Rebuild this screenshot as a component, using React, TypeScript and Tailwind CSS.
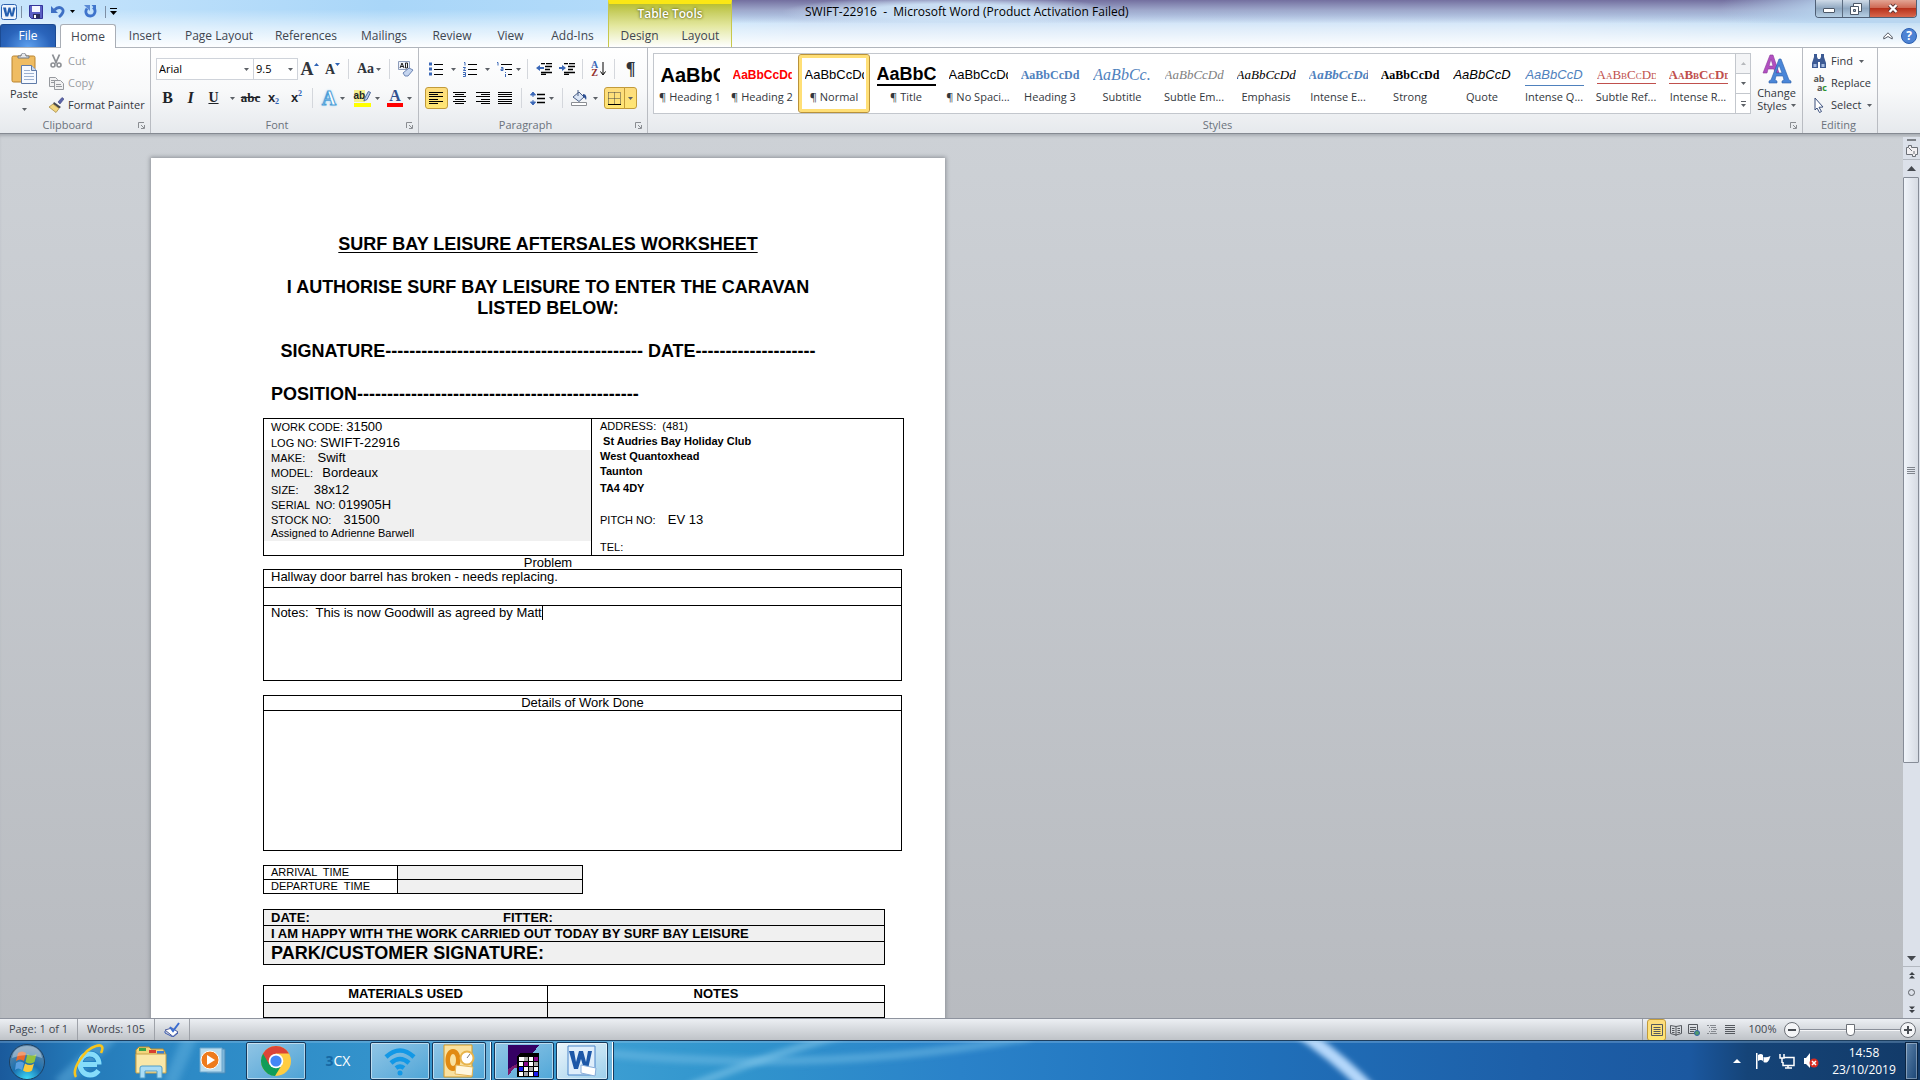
import type { ReactNode } from "react";
import clsx from "clsx";

const tabs = [
  { name: "Insert", width: "w-[58px]" },
  { name: "Page Layout", width: "w-[90px]" },
  { name: "References", width: "w-[84px]" },
  { name: "Mailings", width: "w-[72px]" },
  { name: "Review", width: "w-[64px]" },
  { name: "View", width: "w-[53px]" },
  { name: "Add-Ins", width: "w-[71px]" },
];

const sans = "font-['Liberation_Sans',sans-serif]";
const serif = "font-['Liberation_Serif',serif]";

const styles = [
  { name: "¶ Heading 1", sample: "AaBbC", className: clsx(sans, "text-xl font-bold text-black") },
  { name: "¶ Heading 2", sample: "AaBbCcDd", className: clsx(sans, "text-xs font-bold text-[#ff0000]") },
  { name: "¶ Normal", sample: "AaBbCcDd", className: clsx(sans, "text-[13px] text-black"), active: true },
  { name: "¶ Title", sample: "AaBbC", className: clsx(sans, "text-lg leading-5 font-bold text-black border-b-2 border-black") },
  { name: "¶ No Spaci...", sample: "AaBbCcDd", className: clsx(sans, "text-[13px] text-black") },
  { name: "Heading 3", sample: "AaBbCcDd", className: clsx(serif, "text-xs font-bold text-[#4f81bd]") },
  { name: "Subtitle", sample: "AaBbCc.", className: clsx(serif, "text-base italic text-[#4f81bd]") },
  { name: "Subtle Em...", sample: "AaBbCcDd", className: clsx(serif, "text-[13px] italic text-[#808080]") },
  { name: "Emphasis", sample: "AaBbCcDd", className: clsx(serif, "text-[13px] italic text-black") },
  { name: "Intense E...", sample: "AaBbCcDd", className: clsx(serif, "text-[13px] italic font-bold text-[#4f81bd]") },
  { name: "Strong", sample: "AaBbCcDd", className: clsx(serif, "text-xs font-bold text-black") },
  { name: "Quote", sample: "AaBbCcD", className: clsx(sans, "text-[13px] italic text-black") },
  { name: "Intense Q...", sample: "AaBbCcD", className: clsx(sans, "text-[13px] leading-5 italic text-[#4f81bd] border-b border-[#4f81bd]") },
  { name: "Subtle Ref...", sample: "AaBbCcDd", className: clsx(serif, "text-[13px] leading-4 [font-variant:small-caps] text-[#c0504d] border-b border-[#c0504d]") },
  { name: "Intense R...", sample: "AaBbCcDd", className: clsx(serif, "text-[13px] leading-4 [font-variant:small-caps] font-bold text-[#c0504d] border-b border-[#c0504d]") },
];

const caravan = [
  { label: "WORK CODE: ", value: "31500", className: "h-4" },
  { label: "LOG NO: ", value: "SWIFT-22916", className: "h-[15px]" },
  { label: "MAKE:    ", value: "Swift", className: "h-[15px] bg-[#f0f0f0]" },
  { label: "MODEL:   ", value: "Bordeaux", className: "h-[17px] bg-[#f0f0f0]" },
  { label: "SIZE:     ", value: "38x12", className: "h-[15px] bg-[#f0f0f0]" },
  { label: "SERIAL  NO: ", value: "019905H", className: "h-[15px] bg-[#f0f0f0]" },
  { label: "STOCK NO:    ", value: "31500", className: "h-[15px] bg-[#f0f0f0]" },
];

function Arrow({ className = "" }: { className?: string }) {
  return (
    <svg viewBox="0 0 5 3" className={clsx("h-[3px] w-[5px] shrink-0", className)}>
      <path d="M0 0h5L2.5 3z" fill="#5c6066" />
    </svg>
  );
}

function Tool({ label, className = "w-[23px]", active, children }: { label: string; className?: string; active?: boolean; children: ReactNode }) {
  return (
    <button
      aria-label={label}
      className={clsx(
        "flex h-[22px] shrink-0 items-center justify-center",
        className,
        active && "rounded-[3px] border border-[#c29b3a] bg-gradient-to-b from-[#fddc7e] to-[#ffe673]"
      )}
    >
      {children}
    </button>
  );
}

function Divider() {
  return <div className="mx-1 h-5 w-px shrink-0 bg-[#d4d7dc]" />;
}

function Launcher() {
  return (
    <button aria-label="More options" className="flex h-3 w-3 items-center justify-center">
      <svg viewBox="0 0 7 7" className="h-[7px] w-[7px]" fill="none" stroke="#8a8d92">
        <path d="M.5 6V.5H6M3 3l3 3M6.5 3v3.500H3" />
      </svg>
    </button>
  );
}

function Group({ title, className, launcher = true, children }: { title: string; className?: string; launcher?: boolean; children: ReactNode }) {
  return (
    <section className={clsx("flex shrink-0 flex-col border-r border-[#b9bcc2]", className)}>
      <div className="flex h-[69px]">{children}</div>
      <div className="flex h-4 items-center pr-[3px] text-[#6b727c]">
        <span className="flex-1 text-center">{title}</span>
        {launcher && <Launcher />}
      </div>
    </section>
  );
}

function Lines({ widths, align = "start" }: { widths: number[]; align?: "start" | "middle" | "end" }) {
  return (
    <svg viewBox="0 0 15 12" className="h-3 w-[15px]" shapeRendering="crispEdges">
      {widths.map((w, i) => (
        <rect key={i} y={i * 2.2} width={w} height="1" x={align === "start" ? 0 : align === "end" ? 15 - w : (15 - w) / 2} fill="#000" />
      ))}
    </svg>
  );
}

function WordLogo({ className }: { className: string }) {
  return (
    <svg viewBox="0 0 16 16" className={className}>
      <rect x=".5" y=".5" width="15" height="15" rx="2" fill="#eef4fc" stroke="#2c62ae" />
      <path d="M2 3.500h3l1 6 1.500-6h2l1.500 6 1-6h2.500l-2.200 9h-2.500L8.500 8l-1.300 4.500H4.500z" fill="#2560b0" />
    </svg>
  );
}

function TitleBar() {
  return (
    <header className="flex h-12 shrink-0 border-b border-[#b0b5bc] bg-[linear-gradient(to_bottom,transparent_20%,rgba(255,255,255,.55)_60%,#fdfeff_100%),linear-gradient(to_right,#c8e5fc_0%,#a9d6f8_20%,#b5dcfa_37%,#b4d3f3_42%,#bad7f4_80%,#9fcbee_100%)]">
      <div className="flex flex-col">
        <div className="flex h-[23px] items-center pl-px">
          <WordLogo className="h-4 w-4" />
          <div className="mx-1 h-3 w-px bg-[#7d8fa5]" />
          <button aria-label="Save" className="flex w-5 justify-center">
            <svg viewBox="0 0 14 14" className="h-3.5 w-3.5">
              <path d="M.5.5h13v13H2.500l-2-2z" fill="#5b5fc4" stroke="#34349a" />
              <path d="M3 1h8v6H3z" fill="#f4f6ff" />
              <path d="M4 9h7v4.500H4z" fill="#2b2d5c" />
              <path d="M5 10h2v3H5z" fill="#fff" />
            </svg>
          </button>
          <button aria-label="Undo" className="flex w-6 items-center justify-center">
            <svg viewBox="0 0 14 13" className="h-[13px] w-3.5" fill="none">
              <path d="M3.500 5C8 0 14 3.500 11.500 8c-.8 1.600-2 2.800-3.500 4" stroke="#3e6fc4" strokeWidth="2.800" />
              <path d="M0 1v7h7z" fill="#3e6fc4" />
            </svg>
          </button>
          <svg viewBox="0 0 5 3" className="h-[3px] w-[5px]"><path d="M0 0h5L2.5 3z" /></svg>
          <button aria-label="Repeat" className="flex w-[30px] justify-center">
            <svg viewBox="0 0 13 13" className="h-[13px] w-[13px]" fill="none">
              <path d="M9 2.500c4 3 1.500 8.500-2.500 8.500S.5 7 3 3.500" stroke="#3f74cc" strokeWidth="2.800" />
              <path d="M0 0h6v6z" fill="#5b8ad6" />
              <path d="M7.500 0H12v5z" fill="#3f74cc" />
            </svg>
          </button>
          <div className="mr-1 h-3 w-px bg-[#7d8fa5]" />
          <button aria-label="Customize Quick Access Toolbar" className="flex flex-col items-center gap-0.5">
            <span className="h-px w-[7px] bg-black" />
            <svg viewBox="0 0 7 4" className="h-1 w-[7px]"><path d="M0 0h7L3.500 4z" /></svg>
          </button>
        </div>
        <nav className="flex flex-1 text-xs text-[#3f4650]">
          <button className="mt-px mr-1 w-14 rounded-t-[3px] border border-b-0 border-[#1c4b93] bg-[radial-gradient(ellipse_at_bottom,#5ea0ee,#2a64bb_60%,#2157a8)] text-white">File</button>
          <button className="-mb-px mt-px w-14 rounded-t-[3px] border border-b-0 border-[#a9aeb6] bg-white">Home</button>
          {tabs.map((tab) => (
            <button key={tab.name} className={clsx("pt-0.5", tab.width)}>{tab.name}</button>
          ))}
        </nav>
      </div>
      <div className="flex w-[124px] flex-col border-x border-[#c7c84c] border-t-4 border-t-[#fbe714] bg-gradient-to-b from-[#b8bf31] via-[#e3e79d] to-white">
        <div className="flex h-[19px] items-center justify-center text-xs font-semibold text-white [text-shadow:0_0_3px_#6d7119,0_0_2px_#6d7119]">Table Tools</div>
        <div className="flex flex-1 text-xs text-[#3f4650]">
          <button className="flex-1 pt-0.5">Design</button>
          <button className="flex-1 pt-0.5">Layout</button>
        </div>
      </div>
      <div className="flex flex-1 flex-col bg-[linear-gradient(to_bottom,#736f9f,#9fa9cc_22%,transparent_50%)]">
        <div className="flex h-[23px] items-start justify-between bg-[radial-gradient(ellipse_170px_16px_at_220px_12px,rgba(205,226,246,.95)_50%,transparent),radial-gradient(ellipse_200px_40px_at_100%_8px,#b9d6f0_40%,transparent)]">
          <h1 className="pt-1 pl-[73px] text-xs text-black whitespace-pre">{"SWIFT-22916  -  Microsoft Word (Product Activation Failed)"}</h1>
          <div className="mr-[3px] flex h-[18px] overflow-hidden rounded-b-[4px] border border-t-0 border-[#4f5f75]">
            <button aria-label="Minimize" className="flex w-[27px] items-center justify-center border-r border-[#5c6c80] bg-gradient-to-b from-[#cfdbe8] via-[#8fa7c0] to-[#b6cfe4]">
              <span className="mt-1 h-[5px] w-3 rounded-[1px] border border-[#4c5868] bg-white" />
            </button>
            <button aria-label="Restore Down" className="flex w-[27px] items-center justify-center border-r border-[#5c6c80] bg-gradient-to-b from-[#cfdbe8] via-[#8fa7c0] to-[#b6cfe4]">
              <svg viewBox="0 0 12 12" className="h-3 w-3" fill="#fff" stroke="#4c5868">
                <path d="M3.500.5h8v8h-8z" />
                <path d="M.5 3.500h8v8h-8z" />
                <path d="M3.500 6.500h2v2h-2z" fill="#9fb3c8" />
              </svg>
            </button>
            <button aria-label="Close" className="flex w-[46px] items-center justify-center bg-[linear-gradient(to_bottom,#e3a494,#cf6a55_45%,#b8321c_50%,#d8674d)]">
              <svg viewBox="0 0 12 11" className="h-[11px] w-3" fill="none">
                <path d="M2.500 2l7 7M9.500 2l-7 7" stroke="#5b3434" strokeWidth="4" />
                <path d="M2.500 2l7 7M9.500 2l-7 7" stroke="#fff" strokeWidth="2.400" />
              </svg>
            </button>
          </div>
        </div>
        <div className="flex flex-1 items-center justify-end gap-2 pt-0.5 pr-[3px]">
          <button aria-label="Minimize the Ribbon">
            <svg viewBox="0 0 10 8" className="h-2 w-2.5" fill="#fff" stroke="#555b65"><path d="M5 .8L9.200 5v2L5 4.500.8 7V5z" /></svg>
          </button>
          <button aria-label="Help" className="flex h-4 w-4 items-center justify-center rounded-full border border-[#2c5fb0] bg-[#4d83d4] text-xs font-bold text-white">?</button>
        </div>
      </div>
    </header>
  );
}

function Clipboard() {
  return (
    <Group title="Clipboard" className="w-[151px]">
      <button className="flex w-12 flex-col items-center pt-[5px]">
        <svg viewBox="0 0 27 31" className="h-[31px] w-[27px]">
          <rect x="1" y="3" width="23" height="26" rx="1.500" fill="#efbc62" stroke="#b9832e" />
          <path d="M7 5V3h3c0-4 5-4 5 0h3v2z" fill="#e6e8ec" stroke="#6f7680" />
          <path d="M10.500 12.500h10l5 5v13h-15z" fill="#f5f9ff" stroke="#5f7ba8" />
          <path d="M20.500 12.500v5h5" fill="#c9d9ef" stroke="#5f7ba8" />
          <path d="M13 17.500h6M13 20.500h10M13 23.500h10M13 26.500h10" stroke="#9cb0cf" />
        </svg>
        <span className="leading-5">Paste</span>
        <Arrow className="mt-1" />
      </button>
      <div className="flex flex-col pt-[2px] text-[#9a9da2]">
        <button className="flex h-[22px] items-center gap-1">
          <svg viewBox="0 0 16 16" className="h-4 w-4" fill="none" stroke="#8d9095">
            <path d="M4.500 1.500l4 9M11.500 1.500l-4 9" strokeWidth="1.800" />
            <circle cx="5" cy="12" r="2" strokeWidth="1.600" />
            <circle cx="11" cy="12" r="2" strokeWidth="1.600" />
          </svg>
          Cut
        </button>
        <button className="flex h-[22px] items-center gap-1">
          <svg viewBox="0 0 16 16" className="h-4 w-4" fill="#f1f1f2" stroke="#96999e">
            <path d="M1.500 2.500h6l2 2v7h-8zM3 5.500h4M3 7.500h4" />
            <path d="M6.500 5.500h6l3 3v6h-9zM8 9.500h5M8 11.500h6" />
          </svg>
          Copy
        </button>
        <button className="flex h-[22px] items-center gap-1 text-[#33373d]">
          <svg viewBox="0 0 16 16" className="h-4 w-4">
            <path d="M10 5l4-4.500 2 1.500-4 5z" fill="#5b64a8" stroke="#3d4380" strokeWidth=".6" />
            <path d="M6 5l7 5-2 1.500-6-4.500z" fill="#44474e" />
            <path d="M5 7l6 4.500L8 15.500 1 10z" fill="#f2d680" stroke="#a38439" strokeWidth=".7" />
          </svg>
          Format Painter
        </button>
      </div>
    </Group>
  );
}

function FontGroup() {
  return (
    <Group title="Font" className="w-[268px]">
      <div className="flex flex-col gap-[7px] pt-[10px] pl-[5px]">
        <div className="flex items-center">
          <div className="flex h-[22px] border border-[#cfd3da] bg-white text-black">
            <div className="flex w-[97px] items-center border-r border-[#cfd3da] pr-1">
              <input aria-label="Font" defaultValue="Arial" className="w-full min-w-0 px-0.5 outline-none" />
              <Arrow />
            </div>
            <div className="flex w-[43px] items-center pr-1">
              <input aria-label="Font size" defaultValue="9.5" className="w-full min-w-0 px-0.5 outline-none" />
              <Arrow />
            </div>
          </div>
          <Tool label="Grow Font">
            <span className={clsx(serif, "text-lg font-bold text-[#30343a]")}>A</span>
            <svg viewBox="0 0 5 3" className="mb-2.5 h-[3px] w-[5px]"><path d="M0 3h5L2.500 0z" fill="#2d62b5" /></svg>
          </Tool>
          <Tool label="Shrink Font">
            <span className={clsx(serif, "pt-0.5 text-sm font-bold text-[#30343a]")}>A</span>
            <svg viewBox="0 0 5 3" className="mb-2.5 h-[3px] w-[5px]"><path d="M0 0h5L2.500 3z" fill="#2d62b5" /></svg>
          </Tool>
          <Divider />
          <Tool label="Change Case" className="w-8 gap-0.5">
            <span className={clsx(serif, "text-sm font-bold text-[#30343a]")}>Aa</span>
            <Arrow />
          </Tool>
          <Divider />
          <Tool label="Clear Formatting">
            <svg viewBox="0 0 16 16" className="h-4 w-4">
              <path d="M.5.5h11v8H.5z" fill="#eef2fa" stroke="#8d9cba" />
              <path d="M2 7l2-5 2 5M2.800 5.500h2.500M7.500 2v5h2V2z" fill="none" stroke="#222" />
              <path d="M5 12l6-5 4 2-5 6H7z" fill="#c5d5ef" stroke="#6e86b4" />
            </svg>
          </Tool>
        </div>
        <div className={clsx(serif, "flex items-center text-base text-[#202328]")}>
          <Tool label="Bold"><b>B</b></Tool>
          <Tool label="Italic"><i className="font-semibold">I</i></Tool>
          <Tool label="Underline"><b className="text-sm underline">U</b></Tool>
          <Tool label="Underline style" className="w-3.5"><Arrow /></Tool>
          <Tool label="Strikethrough"><b className="text-[13px] line-through">abc</b></Tool>
          <Tool label="Subscript"><b className={clsx(sans, "text-[13px]")}>x</b><b className="pt-2 text-[8px] text-[#2d62b5]">2</b></Tool>
          <Tool label="Superscript"><b className={clsx(sans, "text-[13px]")}>x</b><b className="pb-2 text-[8px] text-[#2d62b5]">2</b></Tool>
          <Divider />
          <Tool label="Text Effects" className="w-[33px] gap-1">
            <b className="text-xl text-white [-webkit-text-stroke:1px_#4e9fd8] [text-shadow:0_0_3px_#6ebcf0]">A</b><Arrow />
          </Tool>
          <Tool label="Text Highlight Color" className="w-[33px] gap-1">
            <span className="relative h-[17px] w-[17px] border-b-4 border-[#ffff00]">
              <b className="absolute top-0 left-0 bg-[#f5f08c] font-['Liberation_Sans',sans-serif] text-[10px] leading-3">ab</b>
              <svg viewBox="0 0 9 12" className="absolute top-0 right-0 h-3 w-2"><path d="M6 1l2.500 1-4 8L1 11.500l1-3z" fill="#b5cbe9" stroke="#3c5b92" /></svg>
            </span>
            <Arrow />
          </Tool>
          <Tool label="Font Color" className="w-[33px] gap-1">
            <b className="flex h-[17px] w-4 justify-center border-b-4 border-[#ff0000] text-base leading-3 text-[#33518f]">A</b>
            <Arrow />
          </Tool>
        </div>
      </div>
    </Group>
  );
}

function Paragraph() {
  return (
    <Group title="Paragraph" className="w-[229px]">
      <div className="flex flex-col gap-[7px] pt-[10px] pl-[6px]">
        <div className="flex items-center">
          <Tool label="Bullets" className="w-[34px] gap-2">
            <svg viewBox="0 0 14 14" className="h-3.5 w-3.5" stroke="#000"><path d="M5 2.500h9M5 7.500h9M5 12.500h9" /><path d="M0 2h3M0 7h3M0 12h3" stroke="#3b68b8" strokeWidth="3" /></svg>
            <Arrow />
          </Tool>
          <Tool label="Numbering" className="w-[35px] gap-2">
            <svg viewBox="0 0 14 15" className="h-[15px] w-3.5" fill="none" stroke="#000"><path d="M5 2.500h9M5 7.500h9M5 12.500h9" /><path d="M1 .5h1v3M0 5.500h2.500l-2 3H3M0 10.500h2.500v4H0m0-2h2.500" stroke="#3b68b8" /></svg>
            <Arrow />
          </Tool>
          <Tool label="Multilevel List" className="w-[29px] gap-1">
            <svg viewBox="0 0 16 15" className="h-[15px] w-4" fill="none" stroke="#000"><path d="M5 2.500h11M9 7.500h7M12 12.500h4" /><path d="M1 .5h1v3M5 5.500h2v3H5v-1.500h2M9.500 10v1m0 1v3" stroke="#3b68b8" /></svg>
            <Arrow />
          </Tool>
          <Divider />
          <Tool label="Decrease Indent">
            <svg viewBox="0 0 16 12" className="h-3 w-4" fill="none" stroke="#000"><path d="M5 .5h4M10 .5h6M9 3.500h7M9 6.500h5M5 9.500h11M5 11.500h5" strokeWidth="1.300" /><path d="M0 5l4-3v2h4v2H4v2z" fill="#3b68b8" stroke="none" /></svg>
          </Tool>
          <Tool label="Increase Indent">
            <svg viewBox="0 0 16 12" className="h-3 w-4" fill="none" stroke="#000"><path d="M5 .5h4M10 .5h6M9 3.500h7M9 6.500h5M5 9.500h11M5 11.500h5" strokeWidth="1.300" /><path d="M7 5L3 2v2H0v2h3v2z" fill="#3b68b8" stroke="none" /></svg>
          </Tool>
          <Divider />
          <Tool label="Sort">
            <span className={clsx(serif, "flex flex-col text-[10px] leading-[8px] font-bold")}>
              <span className="text-[#3b68b8]">A</span>
              <span className="text-[#93302c]">Z</span>
            </span>
            <svg viewBox="0 0 6 14" className="ml-0.5 h-3.5 w-1.5" fill="none" stroke="#000"><path d="M3 0v12M.5 9.500L3 13l2.500-3.500" /></svg>
          </Tool>
          <Divider />
          <Tool label="Show/Hide ¶"><span className={clsx(serif, "text-lg font-bold text-[#30343a]")}>¶</span></Tool>
        </div>
        <div className="flex items-center">
          <Tool label="Align Text Left" active><Lines widths={[14, 9, 14, 9, 14, 9]} /></Tool>
          <Tool label="Center"><Lines widths={[13, 9, 13, 9, 13, 9]} align="middle" /></Tool>
          <Tool label="Align Text Right"><Lines widths={[14, 9, 14, 9, 14, 9]} align="end" /></Tool>
          <Tool label="Justify"><Lines widths={[14, 14, 14, 14, 14, 14]} /></Tool>
          <Divider />
          <Tool label="Line Spacing" className="w-8 gap-1">
            <svg viewBox="0 0 15 15" className="h-[15px] w-[15px]" stroke="#000"><path d="M7 3.500h8M7 7.500h8M7 11.500h8" strokeWidth="1.400" /><path d="M3 2v4M3 9v4M.5 4L3 1l2.500 3zM.5 11L3 14l2.500-3z" fill="#3b68b8" stroke="#3b68b8" /></svg>
            <Arrow />
          </Tool>
          <Divider />
          <Tool label="Shading" className="w-[34px] gap-1.5">
            <svg viewBox="0 0 16 16" className="h-4 w-4">
              <path d="M2 7l6-5 5 5-5 4.500z" fill="#dbe6f6" stroke="#4a5f86" />
              <path d="M7 0v6" stroke="#4a5f86" />
              <path d="M12 4c3 0 4 3 3 6-1-2-2-3-3-3z" fill="#2c4f94" />
              <path d="M.5 12.500h15v3H.5z" fill="#fff" stroke="#8b8e93" />
            </svg>
            <Arrow />
          </Tool>
          <Tool label="Borders" className="ml-[3px] w-[21px] rounded-r-none" active>
            <svg viewBox="0 0 13 13" className="h-[13px] w-[13px]" fill="none" stroke="#444"><path d="M.5.5h12v11M6.500.5v12M.5 6.500h12M.5.5v12" strokeDasharray="1 1" /><path d="M0 12.500h13" stroke="#000" /></svg>
          </Tool>
          <Tool label="Border options" className="-ml-px w-[13px] rounded-l-none" active><Arrow /></Tool>
        </div>
      </div>
    </Group>
  );
}

function Styles() {
  return (
    <Group title="Styles" className="min-w-0 flex-1">
      <div className="my-[5px] ml-[5px] flex h-[61px] min-w-0 flex-1 overflow-hidden border border-[#c3c7cd] bg-white">
        <div className="flex min-w-0 flex-1 overflow-hidden">
          {styles.map((style) => (
            <button
              key={style.name}
              className={clsx(
                "flex w-[72px] shrink-0 flex-col items-center overflow-hidden border",
                style.active ? "rounded-[3px] border-[#b9923a] shadow-[inset_0_0_0_3px_#ffdf76]" : "border-transparent"
              )}
            >
              <span className="mt-1.5 flex h-7 w-[59px] items-center overflow-hidden">
                <span className={clsx("min-w-full whitespace-nowrap", style.className)}>{style.sample}</span>
              </span>
              <span className="leading-4 whitespace-nowrap">{style.name}</span>
            </button>
          ))}
        </div>
        <div className="flex w-[15px] flex-col border-l border-[#c3c7cd]">
          <button aria-label="Row up" className="flex flex-1 items-center justify-center bg-[#f3f4f6]"><Arrow className="rotate-180 opacity-40" /></button>
          <button aria-label="Row down" className="flex flex-1 items-center justify-center border-y border-[#c3c7cd]"><Arrow /></button>
          <button aria-label="More styles" className="flex flex-1 flex-col items-center justify-center gap-0.5"><span className="h-px w-[5px] bg-[#5c6066]" /><Arrow /></button>
        </div>
      </div>
      <button className="flex w-[51px] flex-col items-center pt-[6px] leading-[13px]">
        <svg viewBox="0 0 30 30" className="mb-0.5 h-[30px] w-[30px]">
          <path fillRule="evenodd" d="M1 19L8 1h3l6 18h-4l-1-4H6l-1 4zM7 12h4L9 5z" fill="#b14fc0" stroke="#8a3a99" strokeWidth=".6" />
          <path fillRule="evenodd" d="M7 29v-2l2-1 8-21h2l8 21 2 1v2h-9v-2l2-1-1-4h-7l-1 4 2 1v2zM14 19h6l-3-8z" fill="#4a86d8" stroke="#2e5fa9" strokeWidth=".6" />
        </svg>
        <span>Change</span>
        <span className="flex items-center gap-1">Styles <Arrow /></span>
      </button>
    </Group>
  );
}

function Editing() {
  return (
    <Group title="Editing" className="mr-[42px] w-[75px]" launcher={false}>
      <div className="flex flex-col pt-[2px] pl-2">
        <button className="flex h-[22px] items-center gap-1">
          <svg viewBox="0 0 16 14" className="h-3.5 w-4" fill="#3c5a94"><path d="M3 0h3v3l1 2h2l1-2V0h3v3l2 6v5H9V8H7v6H1V9l2-6z" /><path d="M2.500 10h3v3h-3zM10.500 10h3v3h-3z" fill="#a5bbe0" /></svg>
          Find <Arrow className="ml-0.5" />
        </button>
        <button className="flex h-[22px] items-center gap-1">
          <span className="flex w-4 flex-col text-[9px] leading-[9px] font-bold text-[#555]">
            <span>ab</span>
            <span className="text-right">a<span className="text-[#2a9432]">c</span></span>
          </span>
          Replace
        </button>
        <button className="flex h-[22px] items-center gap-1">
          <svg viewBox="0 0 16 16" className="h-4 w-4"><path d="M4 1l8 9-4 .3 2.500 4.200-2 1L6 11l-2 2z" fill="#fff" stroke="#3a4f7d" /></svg>
          Select <Arrow className="ml-0.5" />
        </button>
      </div>
    </Group>
  );
}

const cell = "border border-black px-[7px] py-0 align-top";
const shaded = "bg-[#f0f0f0]";

function Worksheet() {
  return (
    <article className={clsx(sans, "mt-6 ml-[151px] w-[794px] shrink-0 bg-white pt-[76px] pr-10 pb-24 pl-28 text-[13px] text-black shadow-[0_0_4px_1px_#8f9399]")}>
      <div className="-ml-[72px] text-center text-lg leading-[21px] font-bold whitespace-pre">
        <h2 className="mb-[22px] underline underline-offset-2">SURF BAY LEISURE AFTERSALES WORKSHEET</h2>
        <p className="mb-[22px]">I AUTHORISE SURF BAY LEISURE TO ENTER THE CARAVAN{"\n"}LISTED BELOW:</p>
        <p className="mb-[22px]">SIGNATURE------------------------------------------- DATE--------------------</p>
        <p className="mb-[13px] pl-20 text-left">POSITION-----------------------------------------------</p>
      </div>

      <table className="w-[641px] table-fixed border-collapse">
        <tbody>
          <tr className="h-[137px]">
            <td className="w-[328px] border border-black p-0 align-top">
              {caravan.map((row) => (
                <div key={row.label} className={clsx("px-[7px] leading-4 whitespace-pre", row.className)}>
                  <span className="text-[11px]">{row.label}</span>{row.value}
                </div>
              ))}
              <div className={clsx(shaded, "h-[14px] px-[7px] text-[11px] leading-[13px]")}>Assigned to Adrienne Barwell</div>
            </td>
            <td className="border border-black px-2 py-0 align-top text-[11px] leading-[15px] whitespace-pre">
              <div>ADDRESS:  (481)</div>
              <div className="font-bold"> St Audries Bay Holiday Club</div>
              <div className="font-bold">West Quantoxhead</div>
              <div className="font-bold">Taunton</div>
              <div className="pt-0.5 font-bold">TA4 4DY</div>
              <div className="mt-4">PITCH NO:    <span className="text-[13px]">EV 13</span></div>
              <div className="mt-3">TEL:</div>
            </td>
          </tr>
        </tbody>
      </table>

      <p className="mr-[72px] text-center leading-[13px]">Problem</p>

      <table className="w-[639px] border-collapse leading-[14px]">
        <tbody>
          <tr className="h-[18px]"><td className={cell}>Hallway door barrel has broken - needs replacing.</td></tr>
          <tr className="h-[18px]"><td className={cell}></td></tr>
          <tr className="h-[75px]">
            <td className={clsx(cell, "whitespace-pre")}>Notes:  This is now Goodwill as agreed by Matt<span className="inline-block h-[14px] w-px bg-black align-top" /></td>
          </tr>
        </tbody>
      </table>

      <table className="mt-[14px] w-[639px] border-collapse leading-[14px]">
        <tbody>
          <tr className="h-[15px]"><td className={clsx(cell, "text-center")}>Details of Work Done</td></tr>
          <tr className="h-[140px]"><td className={cell}></td></tr>
        </tbody>
      </table>

      <table className="mt-[14px] w-80 table-fixed border-collapse text-[11px] leading-[13px] whitespace-pre">
        <tbody>
          <tr className="h-[14px]"><td className={clsx(cell, "w-[134px]")}>ARRIVAL  TIME</td><td className={clsx(cell, shaded)}></td></tr>
          <tr className="h-[14px]"><td className={cell}>DEPARTURE  TIME</td><td className={clsx(cell, shaded)}></td></tr>
        </tbody>
      </table>

      <table className={clsx("mt-[15px] w-[622px] border-collapse leading-[15px] font-bold", shaded)}>
        <tbody>
          <tr className="h-4"><td className={cell}><span className="inline-block w-[232px]">DATE:</span>FITTER:</td></tr>
          <tr className="h-4"><td className={cell}>I AM HAPPY WITH THE WORK CARRIED OUT TODAY BY SURF BAY LEISURE</td></tr>
          <tr className="h-[23px]"><td className={clsx(cell, "text-lg leading-[22px]")}>PARK/CUSTOMER SIGNATURE:</td></tr>
        </tbody>
      </table>

      <table className="mt-5 w-[622px] table-fixed border-collapse leading-4">
        <thead>
          <tr className="h-[17px]"><th className={clsx(cell, "w-[284px]")}>MATERIALS USED</th><th className={cell}>NOTES</th></tr>
        </thead>
        <tbody>
          <tr className={clsx("h-[15px]", shaded)}><td className={cell}></td><td className={cell}></td></tr>
        </tbody>
      </table>
    </article>
  );
}

function ScrollBar() {
  return (
    <div className="mt-[3px] flex w-[17px] shrink-0 flex-col items-center bg-[#dce1ea]">
      <button aria-label="Split" className="flex h-1.5 w-full items-center justify-center"><span className="h-0.5 w-[9px] bg-[#7c8086]" /></button>
      <button aria-label="View Ruler" className="flex h-[17px] w-full items-center justify-center border-b border-[#b3b8c0]">
        <svg viewBox="0 0 12 12" className="h-3 w-3" fill="#f3f1f3" stroke="#6c7077"><path d="M.5 2.500h2v-2h3v2h6v7h-2v2h-3v-2h-6zM3 3l3 3M8 9V6" /></svg>
      </button>
      <button aria-label="Scroll up" className="flex h-[17px] w-full items-center justify-center">
        <svg viewBox="0 0 9 5" className="h-[5px] w-[9px]"><path d="M0 5h9L4.500 0z" fill="#45494f" /></svg>
      </button>
      <div className="flex w-full flex-1 flex-col">
        <div className="mr-px flex flex-[585] flex-col items-center justify-center gap-px rounded-[1px] border border-[#868c97] bg-gradient-to-r from-[#f0f4fa] to-[#d6dbe3]">
          <span className="h-px w-2 bg-[#80858d]" /><span className="h-px w-2 bg-[#80858d]" /><span className="h-px w-2 bg-[#80858d]" /><span className="h-px w-2 bg-[#80858d]" />
        </div>
        <div className="flex-[188]" />
      </div>
      <button aria-label="Scroll down" className="flex h-4 w-full items-center justify-center border-b border-[#b3b8c0]">
        <svg viewBox="0 0 9 5" className="h-[5px] w-[9px]"><path d="M0 0h9L4.500 5z" fill="#45494f" /></svg>
      </button>
      <button aria-label="Previous page" className="flex h-4 w-full items-center justify-center">
        <svg viewBox="0 0 6 7" className="h-[7px] w-1.5" fill="#3c4046"><path d="M0 3h6L3 0zM0 6.500h6L3 3.500z" /></svg>
      </button>
      <button aria-label="Select browse object" className="flex h-[18px] w-full items-center justify-center"><span className="h-[7px] w-[7px] rounded-full border border-[#5c6066]" /></button>
      <button aria-label="Next page" className="flex h-[17px] w-full items-center justify-center">
        <svg viewBox="0 0 6 7" className="h-[7px] w-1.5" fill="#3c4046"><path d="M0 .5h6L3 3.500zM0 4h6L3 7z" /></svg>
      </button>
    </div>
  );
}

function PageIcon({ children }: { children?: ReactNode }) {
  return (
    <svg viewBox="0 0 12 12" className="h-3 w-3" fill="none" stroke="#55595f">
      {children ?? <path d="M.5.5h11v11H.5zM2.500 3.500h7M2.500 5.500h7M2.500 7.500h7M2.500 9.500h7" />}
    </svg>
  );
}

function StatusBar() {
  return (
    <footer className="flex h-[22px] shrink-0 items-center border-t border-[#8e939e] bg-gradient-to-b from-[#eceff3] to-[#bfc3c8] text-[#3f4650]">
      <button className="w-[77px] text-center">Page: 1 of 1</button>
      <div className="h-full w-px bg-[#9ea2a9]" />
      <button className="w-[76px] text-center">Words: 105</button>
      <div className="h-full w-px bg-[#9ea2a9]" />
      <button aria-label="Proofing" className="flex w-[34px] justify-center">
        <svg viewBox="0 0 17 15" className="h-[15px] w-[17px]">
          <path d="M1 8l7-2 6 4-5 4.500z" fill="#fff" stroke="#4b5c9c" />
          <path d="M1 9v2l8 4 5-4" fill="none" stroke="#3c5cb4" />
          <path d="M6 5l3 4 6-8" fill="none" stroke="#3a6cd0" strokeWidth="2" />
        </svg>
      </button>
      <div className="h-full w-px bg-[#9ea2a9]" />
      <div className="ml-auto h-full w-px bg-[#9ea2a9]" />
      <div className="flex items-center pl-1">
        <Tool label="Print Layout" className="mr-px w-[19px]" active><PageIcon /></Tool>
        <Tool label="Full Screen Reading" className="w-[18px]"><PageIcon><path d="M.5 1.500l5.500 1 5.500-1v8L6 11 .5 9.500zM6 2.500V12M2 4.500h2.500M2 6.500h2.500M2 8.500h2.500M7.500 4.500H10M7.500 6.500H10M7.500 8.500H10" /></PageIcon></Tool>
        <Tool label="Web Layout" className="w-[18px]"><PageIcon><path d="M.5.5h9v9h-9zM2 3.500h6M2 5.500h6M2 7.500h4" /><circle cx="9" cy="9" r="2.500" fill="#4f9a6a" stroke="#2f63a8" /></PageIcon></Tool>
        <Tool label="Outline" className="w-[18px]"><PageIcon><path d="M1 1.500h2M4 1.500h6M3 3.500h1M5 3.500h5M5 5.500h1M7 5.500h4M3 7.500h1M5 7.500h5M1 9.500h2M4 9.500h7" stroke="#85898f" /></PageIcon></Tool>
        <Tool label="Draft" className="w-[18px]"><PageIcon><path d="M1 1.500h10M1 3.500h10M1 5.500h10M1 7.500h10M1 9.500h10" /></PageIcon></Tool>
      </div>
      <button className="w-[45px] pl-0.5 text-center">100%</button>
      <button aria-label="Zoom out" className="flex h-4 w-4 items-center justify-center rounded-full border border-[#6c7077] bg-[#f4f5f7]"><span className="h-0.5 w-2 bg-[#4a4e54]" /></button>
      <input
        type="range"
        aria-label="Zoom"
        defaultValue={50}
        className="h-4 w-[100px] appearance-none bg-transparent [&::-webkit-slider-runnable-track]:h-3 [&::-webkit-slider-runnable-track]:bg-[linear-gradient(to_bottom,transparent_5px,#8a8f99_5px,#8a8f99_6px,#f4f5f7_6px,#f4f5f7_7px,transparent_7px)] [&::-webkit-slider-thumb]:h-3 [&::-webkit-slider-thumb]:w-[9px] [&::-webkit-slider-thumb]:appearance-none [&::-webkit-slider-thumb]:rounded-b-[4px] [&::-webkit-slider-thumb]:border [&::-webkit-slider-thumb]:border-[#6c7077] [&::-webkit-slider-thumb]:bg-white"
      />
      <button aria-label="Zoom in" className="mr-1 flex h-4 w-4 items-center justify-center rounded-full border border-[#6c7077] bg-[#f4f5f7]">
        <svg viewBox="0 0 8 8" className="h-2 w-2"><path d="M4 0v8M0 4h8" stroke="#4a4e54" strokeWidth="2" /></svg>
      </button>
    </footer>
  );
}

const openTask = "border border-[#16395c] shadow-[inset_0_0_0_1px_rgba(255,255,255,.5)] rounded-[2px] bg-gradient-to-br";
const openTint = "from-[#a9d3ec]/80 to-[#5fb0de]/60";

function TaskBar() {
  return (
    <footer className="relative flex h-10 shrink-0 items-stretch overflow-hidden border-t border-[#1d3f60] bg-[linear-gradient(to_right,#1a5a9c_0%,#2479b8_4%,#2d8ac6_10%,#3b9dd2_32%,#3195cd_38%,#2a82c9_50%,#2174be_62%,#1d5fa8_80%,#1b58a0_88%,#154478_91%,#123a68_100%)]">
      <svg viewBox="0 0 1920 40" preserveAspectRatio="none" className="absolute inset-0 h-full w-full" fill="none">
        <defs>
          <filter id="soft" filterUnits="userSpaceOnUse" x="0" y="-40" width="1920" height="120"><feGaussianBlur stdDeviation="3" /></filter>
        </defs>
        <path d="M1285 -20Q1345 20 1378 60" stroke="#b5d8fb" strokeWidth="13" filter="url(#soft)" />
        <path d="M600 12Q820 35 1030 -4" stroke="#6fbbe6" strokeOpacity=".5" strokeWidth="9" filter="url(#soft)" />
        <path d="M690 46Q780 10 850 -8" stroke="#8acbee" strokeOpacity=".5" strokeWidth="8" filter="url(#soft)" />
        <path d="M60 44L110 -4M170 44L190 -4" stroke="#6fbbe6" strokeOpacity=".4" strokeWidth="14" filter="url(#soft)" />
        <path d="M0 1h1920" stroke="#a8cdea" strokeOpacity=".6" />
      </svg>
      <div className="relative flex flex-1 items-center">
        <button aria-label="Start" className="ml-2 flex w-[38px] justify-center">
          <svg viewBox="0 0 38 38" className="h-[38px] w-[38px]">
            <defs>
              <radialGradient id="orb" cx=".5" cy="1" r=".9"><stop offset="0" stopColor="#3fe0fb" /><stop offset=".5" stopColor="#1a6fb0" /><stop offset="1" stopColor="#5f87a8" /></radialGradient>
            </defs>
            <circle cx="19" cy="20" r="17.500" fill="url(#orb)" stroke="#1d3f60" />
            <path d="M10 11q4-3 8 0l-2 8q-4-3-8 0z" fill="#e9692c" />
            <path d="M19.500 12q4 3 9 0l-2 8q-5 3-9 0z" fill="#93c23f" />
            <path d="M8 21q4-3 8 0l-2 7q-4-3-7 0z" fill="#5a9fe0" />
            <path d="M17 21.500q5 3 9 0l-2 7q-4 3-9 0z" fill="#fbc93a" />
            <path d="M4 16Q6 4 19 4t15 12Q19 10 4 16z" fill="#fff" fillOpacity=".35" />
          </svg>
        </button>
        <button aria-label="Internet Explorer" className="ml-[27px] flex w-8 justify-center">
          <svg viewBox="0 0 32 38" className="h-[38px] w-8" fill="none">
            <path d="M24 22.500H9M26 22.500c0-7-4-10.500-9.500-10.500S7 16 7 22s4 11 10 11c4 0 6.500-1.500 8.500-4.500" stroke="#1c7fc4" strokeWidth="6.500" />
            <path d="M24 22.500H9M26 22.500c0-7-4-10.500-9.500-10.500S7 16 7 22s4 11 10 11c4 0 6.500-1.500 8.500-4.500" stroke="#86dcfa" strokeWidth="5" />
            <path d="M3 35C-2 27 12 7 23 4c6-2 8 1 5 7" stroke="#f8c51c" strokeWidth="2.600" />
          </svg>
        </button>
        <button aria-label="Windows Explorer" className="ml-[30px] flex w-8 justify-center">
          <svg viewBox="0 0 32 38" className="h-[38px] w-8">
            <path d="M1 8l3-3h10l2 2h12l2 3v20H1z" fill="#f2d57c" stroke="#b58c35" />
            <path d="M4 6h7v3H4z" fill="#3ba447" /><path d="M14 8h7v3h-7z" fill="#d8402f" /><path d="M22 9h7v3h-7z" fill="#3e7fd2" />
            <path d="M1 12h30v19H1z" fill="#f9e7a8" stroke="#c9a34b" />
            <path d="M5 36V26q0-2 2-2h18q2 0 2 2v10h-5v-7H10v7z" fill="#a9dcf5" stroke="#4e9cc8" />
          </svg>
        </button>
        <button aria-label="Windows Media Player" className="ml-[32px] flex w-[27px] justify-center">
          <svg viewBox="0 0 27 30" className="h-[30px] w-[27px]">
            <path d="M4 3h22v24H8z" fill="#7fb7da" stroke="#4d8bb8" />
            <path d="M1 2h22v24H1z" fill="#b9dcef" stroke="#6aa5cb" />
            <circle cx="11" cy="14" r="9" fill="#ee7b1d" stroke="#fff" />
            <path d="M8 9l8 5-8 5z" fill="#fff" />
          </svg>
        </button>
        <button aria-label="Google Chrome" className={clsx(openTask, openTint, "ml-5 flex h-[38px] w-[60px] items-center justify-center")}>
          <svg viewBox="0 0 32 32" className="h-8 w-8">
            <circle cx="16" cy="16" r="15" fill="#ffcd42" />
            <path d="M3 8.500A15 15 0 0 0 15 31L22 19.500 16 16z" fill="#109d59" />
            <path d="M3 8.500A15 15 0 0 1 29 8.500H16L9.500 20z" fill="#dc4437" />
            <circle cx="16" cy="16" r="7.300" fill="#fff" /><circle cx="16" cy="16" r="5.600" fill="#4386f5" />
          </svg>
        </button>
        <button className="ml-[10px] w-[44px] text-center text-sm text-white"><b className="text-[#1668a4]">3</b>CX</button>
        <button aria-label="Wireless" className={clsx(openTask, openTint, "ml-[10px] flex h-[38px] w-[60px] items-center justify-center")}>
          <svg viewBox="0 0 32 30" className="h-[30px] w-8" fill="none" stroke="#1398e6" strokeWidth="4.500">
            <path d="M2 11Q16-2 30 11M7 17Q16 9 25 17M12 22Q16 19 20 22" /><circle cx="16" cy="27" r="2.500" fill="#1398e6" stroke="none" />
          </svg>
        </button>
        <button aria-label="Outlook" className={clsx(openTask, openTint, "ml-[2px] flex h-[38px] w-[54px] items-center justify-center")}>
          <svg viewBox="0 0 32 34" className="h-[34px] w-8">
            <path d="M1 1h28v32H1z" fill="#f9e1a0" stroke="#d79a25" />
            <path fillRule="evenodd" d="M10 5c10 0 10 22 0 22S0 5 10 5m0 5c-4 0-4 12 0 12s4-12 0-12" fill="#e18a13" />
            <circle cx="24" cy="14" r="6.500" fill="#fff" stroke="#e8b44b" strokeWidth="2" /><path d="M24 14l3-4" stroke="#777" />
            <path d="M13 21l17 2-1 9-17-2z" fill="#fff7df" stroke="#e4b658" />
          </svg>
        </button>
        <div className="h-[38px] w-[6px] border-r border-[#16395c] bg-[#8ec4e4]/60 shadow-[inset_-2px_0_0_-1px_#fff]" />
        <button aria-label="Database" className={clsx(openTask, openTint, "ml-[2px] flex h-[38px] w-[60px] items-center justify-center")}>
          <svg viewBox="0 0 32 34" className="h-[34px] w-8" shapeRendering="crispEdges">
            <path d="M0 1h31l-6 8H12v15H6l-6 8z" fill="#350064" /><path d="M0 32l6-8h6v-6L0 25z" fill="#7a1a6e" />
            <path d="M9 12l3-3h19v24H9z" fill="#000" />
            <path d="M11 13h5v4h-5zM21 13h4v4h-4zM11 18h4v4h-4zM21 18h4v4h-4zM16 23h4v4h-4zM26 23h4v4h-4zM11 28h4v4h-4zM21 28h4v4h-4z" fill="#fff" />
            <path d="M16 13h4v4h-4zM26 18h4v4h-4zM21 23h4v4h-4zM16 28h4v4h-4z" fill="#aaa" />
            <path d="M26 13h4v4h-4zM16 18h4v4h-4z" fill="#8b0a8b" /><path d="M11 23h4v4h-4zM26 28h4v4h-4z" fill="#1c1cf0" />
          </svg>
        </button>
        <button aria-label="Microsoft Word" className={clsx(openTask, "ml-[2px] flex h-[38px] w-[52px] items-center justify-center from-white/90 to-[#b5dcf2]/80")}>
          <svg viewBox="0 0 30 32" className="h-8 w-[30px]">
            <path d="M1 1h27v29H1z" fill="#dfeefb" stroke="#4a85c9" />
            <path d="M2 6h5l2 11 3-11h4l3 11 2-11h4l-4 18h-4l-3-10-3 10H7z" fill="#1d58a8" />
            <path d="M14 20l15 3-1 8-14-3z" fill="#fff" stroke="#88aeda" />
          </svg>
        </button>
        <div className="h-[38px] w-[6px] border-r border-[#16395c] bg-[#8ec4e4]/60 shadow-[inset_-2px_0_0_-1px_#fff]" />
      </div>
      <div className="relative flex items-center text-white">
        <button aria-label="Show hidden icons" className="flex w-4 justify-center"><svg viewBox="0 0 8 4" className="h-1 w-2"><path d="M0 4h8L4 0z" fill="#fff" /></svg></button>
        <button aria-label="Action Center" className="ml-[9px] flex w-[17px] justify-center">
          <svg viewBox="0 0 16 16" className="h-4 w-4" fill="#fff"><path d="M1 0h1.500v16H1zM3 2q3-2 5 0v6q-2-2-5 0zM8.500 4q3 1 7-1-1 4-3 6-2 1-4 0z" /></svg>
        </button>
        <button aria-label="Network" className="ml-2 flex w-4 justify-center">
          <svg viewBox="0 0 16 16" className="h-4 w-4" fill="none" stroke="#fff" strokeWidth="1.500"><path d="M5 4.500h10v8H4V9M9 13v2M6 15h7M1 1v4h4V1M3 5v5" /></svg>
        </button>
        <button aria-label="Volume muted" className="ml-2 flex w-4 justify-center">
          <svg viewBox="0 0 16 16" className="h-4 w-4"><path d="M1 5h2l4-5v15L3 11H1z" fill="#fff" /><circle cx="11" cy="10" r="4.500" fill="#d92b20" /><path d="M9 8l4 4M13 8l-4 4" stroke="#fff" strokeWidth="1.500" /></svg>
        </button>
        <button className="flex w-[86px] flex-col items-center pl-1 text-xs leading-[17px]">
          <span>14:58</span>
          <span>23/10/2019</span>
        </button>
        <button aria-label="Show desktop" className="mr-0.5 h-[38px] w-[13px] border border-[#0b2542] bg-gradient-to-br from-[#5d83aa] to-[#1a4676] shadow-[inset_0_0_0_1px_rgba(255,255,255,.35)]" />
      </div>
    </footer>
  );
}

export default function App() {
  return (
    <div className="flex h-screen flex-col overflow-hidden bg-[#c4c7cc] font-['Open_Sans',sans-serif] text-[11px] text-[#33373d]">
      <TitleBar />
      <div className="flex h-[86px] shrink-0 border-b border-[#858a92] bg-gradient-to-b from-white via-[#f8f9fa] to-[#e6e9ed]">
        <Clipboard />
        <FontGroup />
        <Paragraph />
        <Styles />
        <Editing />
      </div>
      <main className="flex min-h-0 flex-1 bg-gradient-to-b from-[#cdd1d6] to-[#b8bbc0] shadow-[inset_0_3px_3px_-1px_#a9adb3]">
        <div className="min-w-0 flex-1 overflow-hidden">
          <Worksheet />
        </div>
        <ScrollBar />
      </main>
      <StatusBar />
      <TaskBar />
    </div>
  );
}
